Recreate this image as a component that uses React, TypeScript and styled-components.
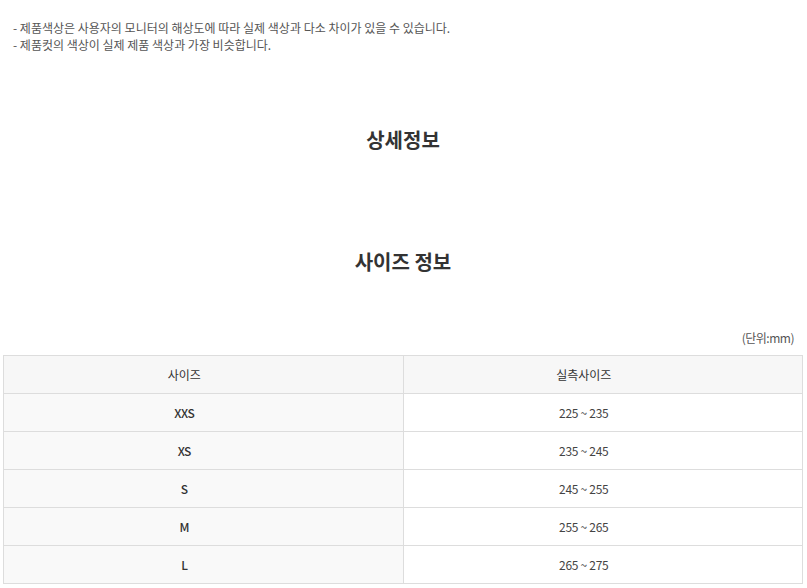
import styled, { createGlobalStyle } from "styled-components";

const GlobalStyle = createGlobalStyle`
  body {
    margin: 0;
    background: #fff;
    font-family: "Noto Sans CJK KR", "Noto Sans", sans-serif;
    color: #333;
  }
`;

type SizeRow = { size: string; range: string };

const sizeRows: Array<SizeRow> = [
  { size: "XXS", range: "225 ~ 235" },
  { size: "XS", range: "235 ~ 245" },
  { size: "S", range: "245 ~ 255" },
  { size: "M", range: "255 ~ 265" },
  { size: "L", range: "265 ~ 275" },
];

function App() {
  return (
    <Page>
      <GlobalStyle />
      <Notes>
        <li>- 제품색상은 사용자의 모니터의 해상도에 따라 실제 색상과 다소 차이가 있을 수 있습니다.</li>
        <li>- 제품컷의 색상이 실제 제품 색상과 가장 비슷합니다.</li>
      </Notes>

      <SectionTitle $top={74}>상세정보</SectionTitle>
      <SectionTitle $top={96}>사이즈 정보</SectionTitle>

      <Unit>(단위:mm)</Unit>
      <SizeTable>
        <thead>
          <tr>
            <HeadCell>사이즈</HeadCell>
            <HeadCell>실측사이즈</HeadCell>
          </tr>
        </thead>
        <tbody>
          {sizeRows.map((row) => (
            <tr key={row.size}>
              <LabelCell>{row.size}</LabelCell>
              <ValueCell>{row.range}</ValueCell>
            </tr>
          ))}
        </tbody>
      </SizeTable>
    </Page>
  );
}

export default App;

// Style
const Page = styled.div`
  width: 807px;
  padding: 0 4px 0 3px;
  box-sizing: border-box;
`;

const Notes = styled.ul`
  list-style: none;
  margin: 0;
  padding: 19px 0 0 10px;
  font-size: 12px;
  line-height: 17px;
  color: #555;
`;

const SectionTitle = styled.h2<{ $top: number }>`
  margin: ${({ $top }) => $top}px 0 0;
  text-align: center;
  font-size: 20px;
  line-height: 26px;
  font-weight: 700;
  color: #333;
`;

const Unit = styled.div`
  margin-top: 56px;
  padding-right: 9px;
  text-align: right;
  font-size: 12px;
  line-height: 14px;
  color: #555;
  letter-spacing: -0.5px;
`;

const SizeTable = styled.table`
  width: 100%;
  margin-top: 10px;
  border-collapse: collapse;
  table-layout: fixed;
  font-size: 12px;
  color: #333;

  td,
  th {
    height: 37px;
    padding: 0 38px 0 0;
    border: 1px solid #dddddd;
    text-align: center;
    vertical-align: middle;
  }
`;

const HeadCell = styled.th`
  background: #f7f7f7;
  font-weight: 400;
`;

const LabelCell = styled.td`
  background: #f9f9f9;
  font-weight: 500;
  letter-spacing: -0.5px;
`;

const ValueCell = styled.td`
  background: #fff;
  color: #444;
  letter-spacing: -0.3px;
`;
